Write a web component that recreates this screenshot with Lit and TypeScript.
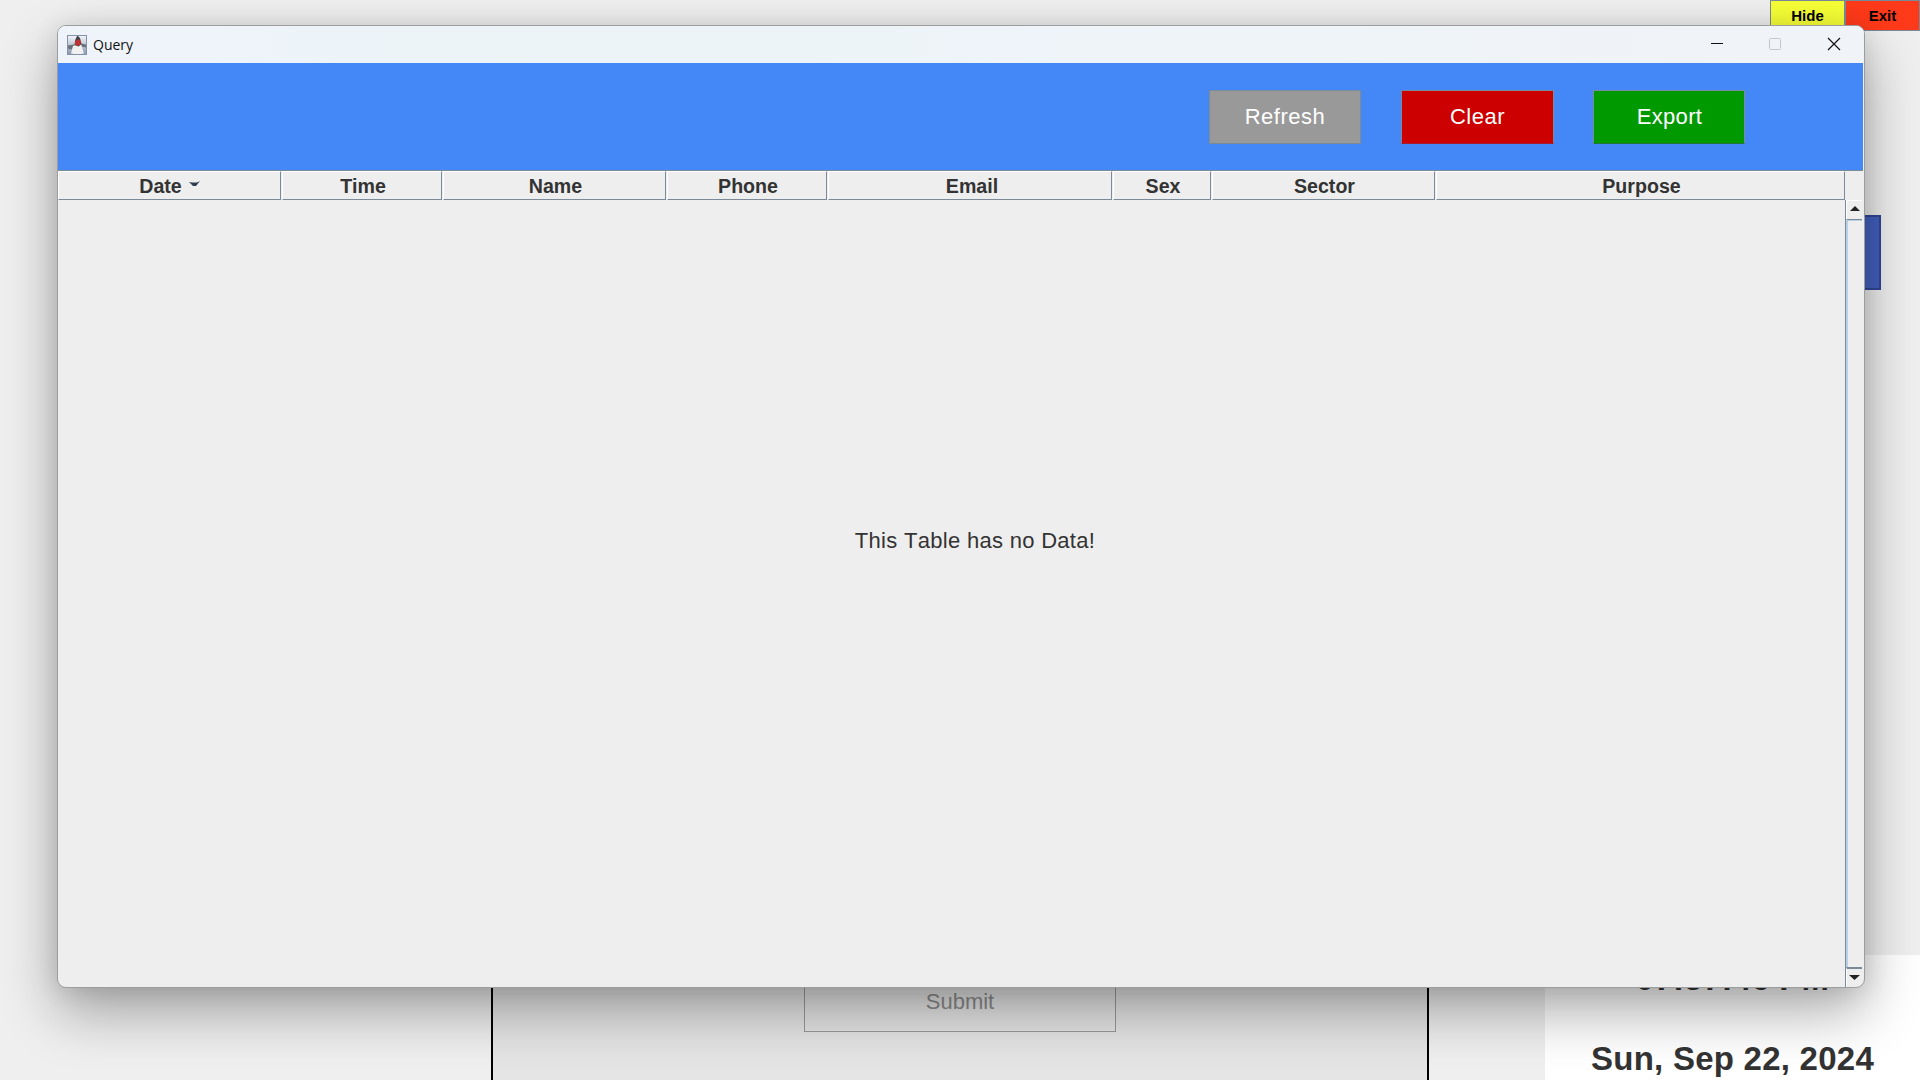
import { LitElement, html, css, svg } from "lit";
import { customElement } from "lit/decorators.js";

const COLUMNS = [
  { label: "Date", width: 223, sorted: true },
  { label: "Time", width: 160 },
  { label: "Name", width: 223 },
  { label: "Phone", width: 160 },
  { label: "Email", width: 284, wide: true },
  { label: "Sex", width: 98 },
  { label: "Sector", width: 223 },
  { label: "Purpose", width: 409 },
];

@customElement("kiosk-form")
export class KioskForm extends LitElement {
  static styles = css`
    :host { display: flex; flex-direction: column; width: 1920px; height: 1080px; background: #efefef; font-family: "Liberation Sans", Arial, sans-serif; }
    .top { display: flex; justify-content: flex-end; height: 31px; }
    .btn { box-sizing: border-box; width: 75px; height: 31px; border: 1px solid #7a8a99; font-weight: bold; font-size: 15px; line-height: 30px; text-align: center; color: #000; }
    .hide { background: #f6ff35; }
    .exit { background: #ff3a1a; }
    .accent { align-self: flex-end; box-sizing: border-box; width: 140px; height: 75px; margin: 184px 39px 0 0; border: 2px solid #304796; background: #4361c0; }
    .bottom { display: flex; margin-top: 665px; height: 125px; }
    .panel { box-sizing: border-box; width: 938px; margin-left: 491px; border: solid #000; border-width: 0 2px; background: #e5e5e5; display: flex; justify-content: center; }
    .submit { box-sizing: border-box; width: 312px; height: 77px; border: 1px solid #999; color: #8c8c8c; font-size: 22px; line-height: 25px; padding-top: 33px; text-align: center; }
    .clock { width: 375px; margin-left: 116px; background: #fff; color: #333; font-weight: bold; font-size: 33px; line-height: 38px; text-align: center; letter-spacing: 0.25px; font-kerning: none; }
    .time { padding-top: 5px; }
    .date { padding-top: 42px; }
  `;
  render() {
    return html`
      <div class="top"><div class="btn hide">Hide</div><div class="btn exit">Exit</div></div>
      <div class="accent"></div>
      <div class="bottom">
        <div class="panel"><div class="submit">Submit</div></div>
        <div class="clock"><div class="time">07:57:46 PM</div><div class="date">Sun, Sep 22, 2024</div></div>
      </div>`;
  }
}

@customElement("query-window")
export class QueryWindow extends LitElement {
  static styles = css`
    :host { box-sizing: border-box; display: flex; flex-direction: column; border: 1px solid #9c9d9f; border-radius: 9px; overflow: hidden; background: #eee; color: #333; font-family: "Liberation Sans", Arial, sans-serif; font-kerning: none; }
    .title { display: flex; align-items: center; height: 37px; background: linear-gradient(90deg, #eff4fa, #ecf4f8 25%, #eff4f9 70%, #f0f3f8); }
    .logo { margin-left: 9px; }
    .name { flex: 1; margin-left: 6px; font: 14px "Open Sans", sans-serif; color: #111; }
    .controls { display: block; }
    .tools { display: flex; box-sizing: border-box; gap: 40px; height: 107px; margin-right: 1px; padding: 27px 0 0 1151px; background: #4487f6; }
    .tool { box-sizing: border-box; width: 152px; height: 54px; border: 1px solid #7a8a99; font-size: 22px; line-height: 52px; letter-spacing: 0.5px; text-align: center; color: #fff; }
    .refresh { background: #999; }
    .clear { width: 153px; margin-right: -1px; background: #c00; border-bottom-color: #a31d33; }
    .export { background: #090; border-bottom-color: #24763f; letter-spacing: 0.3px; padding-left: 1px; }
    .main { display: flex; flex: 1; min-height: 0; }
    .table { width: 1787px; display: flex; flex-direction: column; border-top: 1px solid #7a8a99; }
    .head { display: flex; gap: 1px; height: 29px; }
    .cell { box-sizing: border-box; flex: none; display: flex; justify-content: center; align-items: center; border: 1px solid #7a8a99; border-top-color: #fff; border-left-color: #fff; padding-left: 2px; font-weight: bold; font-size: 19.6px; line-height: 26px; gap: 7px; }
    .cell.sorted { padding-left: 0; }
    .cell.wide { padding-left: 4px; }
    .cell svg { margin-bottom: 3px; }
    .empty { display: flex; flex: 1; justify-content: center; padding-top: 328px; font-size: 22px; line-height: 25px; letter-spacing: 0.3px; padding-left: 47px; }
    .side { width: 18px; display: flex; flex-direction: column; border-top: 1px solid #7a8a99; }
    .corner { height: 29px; }
    .bar { flex: 1; display: flex; flex-direction: column; border-left: 1px solid #7a8a99; padding-right: 1px; }
    .arrow { height: 20px; box-sizing: border-box; border-top: 1px solid #fff; border-left: 1px solid #fff; border-bottom: 1px solid #7a8a99; }
    .arrow.down { border-top: 2px solid #7a8a99; border-bottom: 0; }
    .arrow svg { display: block; }
    .thumb { flex: 1; border-left: 2px solid #b8cfe5; border-top: 1px solid #b8cfe5; }
  `;
  render() {
    return html`
      <div class="title">
        <svg class="logo" width="20" height="20" viewBox="0 0 20 20">
          <defs><linearGradient id="sky" x2="0" y2="1"><stop stop-color="#f4f6fa" /><stop offset="1" stop-color="#8797ad" /></linearGradient></defs>
          <rect x=".5" y=".5" width="19" height="19" fill="url(#sky)" stroke="#8494a8" />
          <path d="M1 10.500l6-1 1 3-4 2-3-1zM14 8.500l5 1v3l-5-1z" fill="#68717c" />
          <path d="M6 11l8-2 3 9.500q-6 1-13 0z" fill="#f1f0f0" />
          <path d="M10 1q2.500 0 3.500 4l1 4-3 2.500-4-1.500q0-5 2.500-9z" fill="#3d3f43" />
          <path d="M8 6.500l3-2.500 3 2.500-1 3.500-2.500 1-2.500-2z" fill="#c23232" />
        </svg>
        <div class="name">Query</div>
        <svg class="controls" width="160" height="37" fill="none">
          <path d="M7 17.500h12" stroke="#111" />
          <rect x="65.500" y="12.500" width="11" height="11" rx="1" stroke="#c3c7cc" />
          <path d="M124 12l12 12M136 12l-12 12" stroke="#111" stroke-width="1.2" />
        </svg>
      </div>
      <div class="tools">
        <div class="tool refresh">Refresh</div><div class="tool clear">Clear</div><div class="tool export">Export</div>
      </div>
      <div class="main">
        <div class="table">
          <div class="head">
            ${COLUMNS.map((c) => html`<div class="cell ${c.sorted ? "sorted" : c.wide ? "wide" : ""}" style="width:${c.width}px">${c.label}${c.sorted
              ? svg`<svg width="11" height="6"><path d="M0 1l3 .5h5l3-1.500-4 5h-3z" fill="#2b3e50" /></svg>` : ""}</div>`)}
          </div>
          <div class="empty">This Table has no Data!</div>
        </div>
        <div class="side">
          <div class="corner"></div>
          <div class="bar">
            <div class="arrow"><svg width="15" height="17"><path d="M3 10l5-5 5 5z" fill="#222" /></svg></div>
            <div class="thumb"></div>
            <div class="arrow down"><svg width="15" height="17"><path d="M2 6h11l-5.500 5z" fill="#222" /></svg></div>
          </div>
        </div>
      </div>`;
  }
}

@customElement("app-root")
export class AppRoot extends LitElement {
  static styles = css`
    :host { display: block; position: relative; width: 1920px; height: 1080px; overflow: hidden; }
    .window { position: absolute; left: 57px; top: 25px; width: 1808px; height: 963px; box-shadow: 0 24px 56px rgba(0, 0, 0, 0.33), 0 2px 24px rgba(0, 0, 0, 0.1); }
  `;
  render() {
    return html`<kiosk-form></kiosk-form><query-window class="window"></query-window>`;
  }
}
